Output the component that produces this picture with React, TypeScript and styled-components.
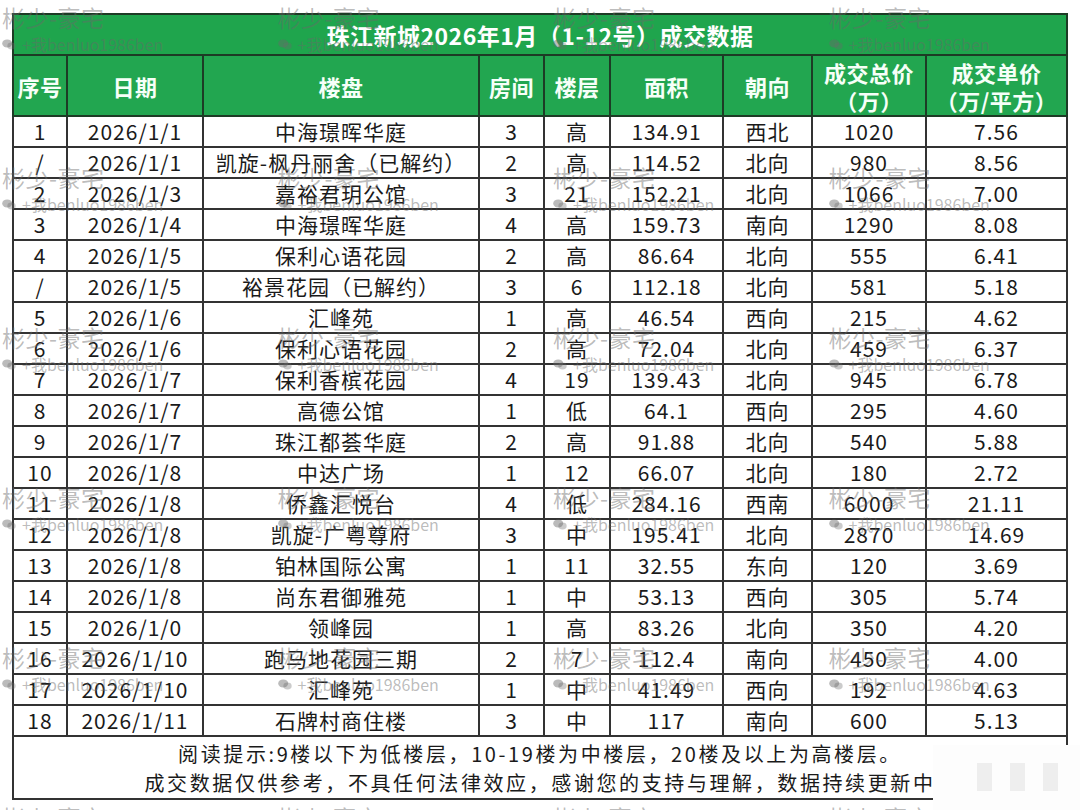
import React from "react";
import styled, { createGlobalStyle } from "styled-components";

const Global = createGlobalStyle`
  html, body { margin: 0; padding: 0; background: #ffffff; }
  body { font-family: "Noto Sans CJK SC", "Noto Sans", sans-serif; color: #1a1a1a; }
`;

const Page = styled.div`
  position: relative;
  width: 1080px;
  height: 810px;
  overflow: hidden;
  background: #ffffff;
  padding: 13px 0 0 12px;
  box-sizing: border-box;
`;

const Table = styled.table`
  width: 1054px;
  table-layout: fixed;
  border-collapse: collapse;
  font-family: "Noto Sans CJK SC", "Noto Sans", sans-serif;
`;

const TitleCell = styled.th`
  height: 39px;
  padding: 0;
  background: #1fa54d;
  color: #ffffff;
  font-size: 23px;
  font-weight: 700;
  letter-spacing: 0.5px;
  text-align: center;
  border: 2px solid #1d3b25;
`;

const HeadCell = styled.th`
  height: 59px;
  padding: 0;
  background: #22a650;
  color: #f6fff8;
  font-size: 22px;
  font-weight: 700;
  line-height: 28px;
  letter-spacing: 0.5px;
  text-align: center;
  border: 2px solid #1d3b25;
`;

const Cell = styled.td`
  height: 29px;
  padding: 0;
  font-size: 21px;
  line-height: 29px;
  letter-spacing: 1px;
  color: #1a1a1a;
  text-align: center;
  white-space: nowrap;
  border: 2px solid #333333;
`;

const NoteCell = styled.td`
  padding: 2px 0 1px;
  font-size: 20px;
  line-height: 29px;
  letter-spacing: 2.6px;
  color: #1a1a1a;
  text-align: center;
  border: 2px solid #333333;
`;

const Watermarks = styled.div`
  position: absolute;
  inset: 0;
  pointer-events: none;
  display: grid;
  grid-template-columns: repeat(4, 275.5px);
  grid-auto-rows: 160px;
  padding: 3px 0 0 2px;
  box-sizing: border-box;
  z-index: 2;
`;

const Mark = styled.div`
  display: flex;
  flex-direction: column;
`;

const MarkName = styled.div`
  font-size: 23px;
  line-height: 28px;
  letter-spacing: 0.5px;
  color: rgba(105, 105, 105, 0.45);
  font-family: "Noto Sans CJK SC", "Noto Sans", sans-serif;
`;

const MarkSub = styled.div`
  margin-top: 3px;
  display: flex;
  align-items: center;
  gap: 6px;
  font-size: 16px;
  line-height: 20px;
  color: rgba(105, 105, 105, 0.45);
  font-family: "Noto Sans CJK SC", "Noto Sans", sans-serif;
`;

const Patch = styled.div`
  position: absolute;
  left: 933px;
  top: 745px;
  width: 147px;
  height: 65px;
  background: #fdfdfd;
  z-index: 3;
  display: flex;
  gap: 18px;
  padding: 18px 0 0 44px;
  box-sizing: border-box;
`;

const PatchBlock = styled.div`
  width: 15px;
  height: 28px;
  background: #eeeeee;
`;

const cols = [54, 136, 276, 65, 66, 113, 89, 114, 141];

type Row = [string, string, string, string, string, string, string, string, string];

const rows: Row[] = [
  ["1", "2026/1/1", "中海璟晖华庭", "3", "高", "134.91", "西北", "1020", "7.56"],
  ["/", "2026/1/1", "凯旋-枫丹丽舍（已解约）", "2", "高", "114.52", "北向", "980", "8.56"],
  ["2", "2026/1/3", "嘉裕君玥公馆", "3", "21", "152.21", "北向", "1066", "7.00"],
  ["3", "2026/1/4", "中海璟晖华庭", "4", "高", "159.73", "南向", "1290", "8.08"],
  ["4", "2026/1/5", "保利心语花园", "2", "高", "86.64", "北向", "555", "6.41"],
  ["/", "2026/1/5", "裕景花园（已解约）", "3", "6", "112.18", "北向", "581", "5.18"],
  ["5", "2026/1/6", "汇峰苑", "1", "高", "46.54", "西向", "215", "4.62"],
  ["6", "2026/1/6", "保利心语花园", "2", "高", "72.04", "北向", "459", "6.37"],
  ["7", "2026/1/7", "保利香槟花园", "4", "19", "139.43", "北向", "945", "6.78"],
  ["8", "2026/1/7", "高德公馆", "1", "低", "64.1", "西向", "295", "4.60"],
  ["9", "2026/1/7", "珠江都荟华庭", "2", "高", "91.88", "北向", "540", "5.88"],
  ["10", "2026/1/8", "中达广场", "1", "12", "66.07", "北向", "180", "2.72"],
  ["11", "2026/1/8", "侨鑫汇悦台", "4", "低", "284.16", "西南", "6000", "21.11"],
  ["12", "2026/1/8", "凯旋-广粤尊府", "3", "中", "195.41", "北向", "2870", "14.69"],
  ["13", "2026/1/8", "铂林国际公寓", "1", "11", "32.55", "东向", "120", "3.69"],
  ["14", "2026/1/8", "尚东君御雅苑", "1", "中", "53.13", "西向", "305", "5.74"],
  ["15", "2026/1/0", "领峰园", "1", "高", "83.26", "北向", "350", "4.20"],
  ["16", "2026/1/10", "跑马地花园三期", "2", "7", "112.4", "南向", "450", "4.00"],
  ["17", "2026/1/10", "汇峰苑", "1", "中", "41.49", "西向", "192", "4.63"],
  ["18", "2026/1/11", "石牌村商住楼", "3", "中", "117", "南向", "600", "5.13"],
];

const headers: React.ReactNode[] = [
  "序号",
  "日期",
  "楼盘",
  "房间",
  "楼层",
  "面积",
  "朝向",
  <>成交总价<br />（万）</>,
  <>成交单价<br />（万/平方）</>,
];

const WeChatIcon = () => (
  <svg width="14" height="11" viewBox="0 0 14 11">
    <ellipse cx="5.2" cy="4.4" rx="5" ry="4" fill="rgba(105,105,105,0.45)" />
    <ellipse cx="9.5" cy="7" rx="4.2" ry="3.4" fill="rgba(105,105,105,0.35)" />
  </svg>
);

export default function App() {
  const marks = Array.from({ length: 24 });
  return (
    <>
      <Global />
      <Page>
        <Table>
          <colgroup>
            {cols.map((w, i) => (
              <col key={i} style={{ width: w }} />
            ))}
          </colgroup>
          <thead>
            <tr>
              <TitleCell colSpan={9}>珠江新城2026年1月（1-12号）成交数据</TitleCell>
            </tr>
            <tr>
              {headers.map((h, i) => (
                <HeadCell key={i}>{h}</HeadCell>
              ))}
            </tr>
          </thead>
          <tbody>
            {rows.map((r, i) => (
              <tr key={i}>
                {r.map((v, j) => (
                  <Cell key={j}>{v}</Cell>
                ))}
              </tr>
            ))}
            <tr>
              <NoteCell colSpan={9}>
                阅读提示:9楼以下为低楼层，10-19楼为中楼层，20楼及以上为高楼层。
                <br />
                成交数据仅供参考，不具任何法律效应，感谢您的支持与理解，数据持续更新中
              </NoteCell>
            </tr>
          </tbody>
        </Table>
        <Patch>
          <PatchBlock />
          <PatchBlock />
          <PatchBlock />
        </Patch>
        <Watermarks>
          {marks.map((_, i) => (
            <Mark key={i}>
              <MarkName>彬少-豪宅</MarkName>
              <MarkSub>
                <WeChatIcon />
                <span>+我benluo1986ben</span>
              </MarkSub>
            </Mark>
          ))}
        </Watermarks>
      </Page>
    </>
  );
}
